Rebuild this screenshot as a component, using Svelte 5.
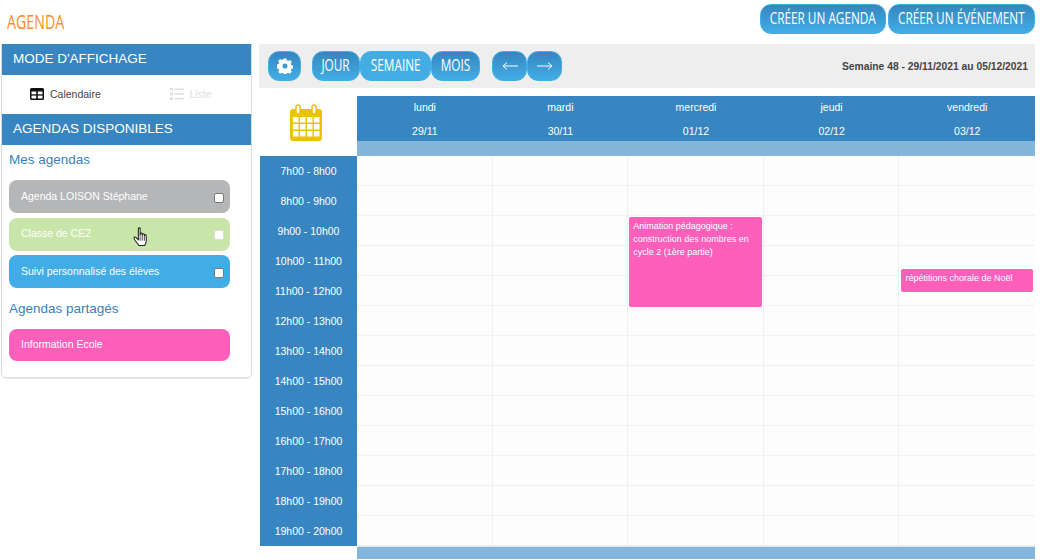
<script>
	const days = [
		{ name: 'lundi', date: '29/11', events: [] },
		{ name: 'mardi', date: '30/11', events: [] },
		{
			name: 'mercredi',
			date: '01/12',
			events: [{ title: 'Animation pédagogique : construction des nombres en cycle 2 (1ère partie)', top: 61, height: 90, left: 1 }]
		},
		{ name: 'jeudi', date: '02/12', events: [] },
		{ name: 'vendredi', date: '03/12', events: [{ title: 'répétitions chorale de Noël', top: 113, height: 23, left: 2 }] }
	];

	const hours = Array.from({ length: 13 }, (_, i) => `${i + 7}h00 - ${i + 8}h00`);

	const myAgendas = [
		{ label: 'Agenda LOISON Stéphane', color: 'grey' },
		{ label: 'Classe de CE2', color: 'green' },
		{ label: 'Suivi personnalisé des élèves', color: 'blue' }
	];
</script>

<div class="page">
	<header>
		<h1>AGENDA</h1>
		<div class="actions">
			<button class="btn create"><span>CRÉER UN AGENDA</span></button>
			<button class="btn event-btn"><span>CRÉER UN ÉVÉNEMENT</span></button>
		</div>
	</header>

	<div class="content">
		<aside>
			<h2>MODE D'AFFICHAGE</h2>
			<div class="modes">
				<div class="mode">
					<svg width="14" height="12" viewBox="0 0 14 12">
						<rect x="0" y="0" width="14" height="12" rx="1.5" fill="#111" />
						<rect x="1.5" y="3.5" width="4.7" height="2.8" fill="#fff" />
						<rect x="7.8" y="3.5" width="4.7" height="2.8" fill="#fff" />
						<rect x="1.5" y="7.6" width="4.7" height="2.9" fill="#fff" />
						<rect x="7.8" y="7.6" width="4.7" height="2.9" fill="#fff" />
					</svg>
					<span>Calendaire</span>
				</div>
				<div class="mode off">
					<svg width="14" height="12" viewBox="0 0 14 12" fill="#dedede">
						<rect x="0" y="0" width="3" height="2.6" />
						<rect x="0" y="4.7" width="3" height="2.6" />
						<rect x="0" y="9.4" width="3" height="2.6" />
						<rect x="4.5" y="0.5" width="9.5" height="1.5" />
						<rect x="4.5" y="5.2" width="9.5" height="1.5" />
						<rect x="4.5" y="9.9" width="9.5" height="1.5" />
					</svg>
					<span>Liste</span>
				</div>
			</div>
			<h2>AGENDAS DISPONIBLES</h2>
			<div class="lists">
				<h3>Mes agendas</h3>
				<div class="agendas">
					{#each myAgendas as a}
						<div class="agenda {a.color}">
							<span>{a.label}</span>
							<input type="checkbox" />
							{#if a.color === 'green'}
								<svg class="cursor" width="17" height="21" viewBox="0 0 16 20">
									<path
										d="M5 1.6c0-1 1.7-1 1.7 0V8l.3-1.6c.2-.9 1.6-.8 1.7.1V8.500l.3-1.500c.2-.9 1.600-.7 1.700.2v1.700l.3-1c.3-.8 1.500-.5 1.500.4v4.700c0 2-.8 3.200-1.500 4.700H5.500C4.800 16.500 3.800 15.300 2.800 14 2 13 1 11.500 .9 10.500c-.1-.9 1-1.300 1.700-.6L5 12.300Z"
										fill="#fff"
										stroke="#222"
										stroke-width="1"
										stroke-linejoin="round"
									/>
									<path d="M6.700 9v4M8.700 9v4M10.700 9.500v3.500" stroke="#222" stroke-width=".8" fill="none" />
								</svg>
							{/if}
						</div>
					{/each}
				</div>
				<h3 class="shared">Agendas partagés</h3>
				<div class="agenda pink"><span>Information Ecole</span></div>
			</div>
		</aside>

		<main>
			<div class="toolbar">
				<button class="btn square" aria-label="Paramètres">
					<svg width="16" height="16" viewBox="0 0 16 16">
						<path
							fill="#fff"
							fill-rule="evenodd"
							d="M6.600 .5h2.800l.4 2 1.300.6 1.800-1.100 2 2-1.100 1.800.6 1.300 2 .4v2.800l-2 .4-.6 1.300 1.100 1.800-2 2-1.800-1.100-1.300.6-.4 2H6.600l-.4-2-1.300-.6-1.800 1.100-2-2 1.100-1.800-.6-1.300-2-.4V6.500l2-.4.6-1.300L1.100 3l2-2 1.800 1.100 1.300-.6ZM8 5.500a2.500 2.500 0 1 0 0 5 2.500 2.500 0 0 0 0-5Z"
						/>
					</svg>
				</button>
				<div class="group views">
					<button class="btn jour"><span>JOUR</span></button>
					<button class="btn active semaine"><span>SEMAINE</span></button>
					<button class="btn mois"><span>MOIS</span></button>
				</div>
				<div class="group">
					<button class="btn arrow" aria-label="Précédent">
						<svg width="16" height="10" viewBox="0 0 16 10" fill="none" stroke="#fff" stroke-width="1">
							<path d="M1 5h15M5 1.500 1 5l4 3.500" />
						</svg>
					</button>
					<button class="btn arrow" aria-label="Suivant">
						<svg width="16" height="10" viewBox="0 0 16 10" fill="none" stroke="#fff" stroke-width="1">
							<path d="M0 5h15M11 1.500 15 5l-4 3.500" />
						</svg>
					</button>
				</div>
				<div class="week">Semaine 48 - 29/11/2021 au 05/12/2021</div>
			</div>

			<div class="calendar">
				<div class="hours">
					<div class="corner">
						<svg width="34" height="37" viewBox="0 0 34 37">
							<rect x="1" y="5" width="32" height="32" rx="3" fill="#ecc300" />
							<rect x="7" y="1" width="4" height="9" rx="2" fill="#fff" stroke="#ecc300" stroke-width="1.500" />
							<rect x="23" y="1" width="4" height="9" rx="2" fill="#fff" stroke="#ecc300" stroke-width="1.500" />
							<g fill="#fff">
								{#each [13, 20, 27] as y}
									{#each [4, 11, 18, 25] as x}
										<rect {x} {y} width="5.500" height="5.500" />
									{/each}
								{/each}
							</g>
						</svg>
					</div>
					{#each hours as h}
						<div class="hour">{h}</div>
					{/each}
				</div>
				{#each days as d}
					<div class="day">
						<div class="day-head">
							<span>{d.name}</span>
							<span>{d.date}</span>
						</div>
						<div class="day-strip"></div>
						<div class="cells">
							{#each hours as h}
								<div class="cell"></div>
							{/each}
							{#each d.events as e}
								<div class="event" style="top: {e.top}px; height: {e.height}px; left: {e.left}px">{e.title}</div>
							{/each}
						</div>
						<div class="day-foot"></div>
					</div>
				{/each}
			</div>
		</main>
	</div>
</div>

<style>
	:global(body) {
		background: #fff;
		font-family: 'Liberation Sans', Arial, sans-serif;
	}

	.page {
		width: 1040px;
		height: 560px;
		overflow: hidden;
	}

	header {
		height: 44px;
		display: flex;
		justify-content: space-between;
		padding: 4px 5px 0 7px;
		box-sizing: border-box;
	}

	h1 {
		margin: 8px 0 0;
		font: 400 20px/20px 'Open Sans', sans-serif;
		color: #ff8a2b;
		transform: scaleX(0.71);
		transform-origin: left;
	}

	.actions {
		display: flex;
		gap: 2px;
	}

	/* no hand-drawn font here, so the label is squeezed to get the same narrow caps */
	.btn {
		height: 30px;
		padding: 0;
		border: 1px solid #43aee6;
		border-radius: 11px;
		background: linear-gradient(#3686c0, #42ade5);
		color: #fff;
		font: 400 15.500px/1 'Open Sans', sans-serif;
		white-space: nowrap;
		display: flex;
		align-items: center;
		justify-content: center;
	}

	.btn span {
		display: block;
		transform: scaleX(0.76);
	}

	.create {
		width: 126px;
	}

	.event-btn {
		width: 147px;
	}

	.content {
		display: flex;
		gap: 7px;
		padding-left: 1px;
	}

	aside {
		width: 251px;
		height: 334px;
		box-sizing: border-box;
		border: 1px solid #d8dde2;
		border-top: 0;
		border-radius: 0 0 5px 5px;
		box-shadow: 0 1px 1px #e8e8e8;
	}

	h2 {
		margin: 0;
		height: 31px;
		padding-left: 11px;
		background: #3786c1;
		color: #fff;
		font: 400 13.500px/30px 'Liberation Sans', sans-serif;
	}

	.modes {
		height: 39px;
		display: flex;
	}

	.mode {
		width: 50%;
		display: flex;
		align-items: center;
		padding-left: 28px;
		box-sizing: border-box;
		gap: 6px;
		font-size: 10.500px;
		color: #444;
		padding-bottom: 2px;
	}

	.mode.off {
		color: #dedede;
		padding-left: 43px;
	}

	.lists {
		padding: 6px 21px 0 7px;
	}

	h3 {
		margin: 0 0 11px;
		font: 400 13.500px/18px 'Liberation Sans', sans-serif;
		color: #3a7fb8;
	}

	h3.shared {
		margin: 12px 0 11px;
	}

	.agendas {
		display: flex;
		flex-direction: column;
		gap: 4.500px;
	}

	.agenda {
		position: relative;
		height: 33px;
		border-radius: 8px;
		box-sizing: border-box;
		padding: 0 6px 2px 12px;
		display: flex;
		align-items: center;
		justify-content: space-between;
		color: #fff;
		font-size: 10.500px;
	}

	.agenda input {
		width: 8px;
		height: 8px;
		margin: 4px 0 0;
		appearance: none;
		background: #fff;
		border: 1px solid #777;
		border-radius: 2px;
		box-sizing: content-box;
	}

	.agenda.green input {
		border-color: #ddd;
	}

	.grey {
		background: #b5b6b8;
	}

	.green {
		background: #c8e6a9;
	}

	.blue {
		background: #41ace6;
	}

	.pink {
		background: #fe5fbb;
		height: 32px;
		padding-bottom: 3px;
	}

	.cursor {
		position: absolute;
		left: 124px;
		top: 9px;
	}

	main {
		width: 776px;
	}

	.toolbar {
		height: 44px;
		background: #eee;
		display: flex;
		align-items: center;
		padding: 0 7px 0 9px;
		box-sizing: border-box;
	}

	.square {
		width: 33px;
	}

	.group {
		display: flex;
		margin-left: 12px;
	}

	.views {
		margin-left: 11px;
	}

	.jour {
		width: 48px;
	}

	.semaine {
		width: 71px;
	}

	.mois {
		width: 49px;
	}

	.btn.active {
		background: linear-gradient(#42ade5, #42ade5);
	}

	.arrow {
		width: 35px;
	}

	.week {
		margin-left: auto;
		font-size: 10.300px;
		font-weight: 700;
		color: #444;
	}

	.calendar {
		margin-top: 8px;
		display: grid;
		grid-template-columns: 98px repeat(5, 1fr);
	}

	.corner {
		height: 60px;
		background: #fff;
		display: flex;
		justify-content: center;
		padding: 8px 5px 0 0;
		box-sizing: border-box;
	}

	.hour {
		height: 30px;
		margin-left: 1px;
		background: #3786c1;
		color: #fff;
		font-size: 10.500px;
		line-height: 30px;
		text-align: center;
	}

	.day-head {
		height: 45px;
		background: #3786c1;
		color: #fff;
		font-size: 10.500px;
		display: flex;
		flex-direction: column;
		align-items: center;
		justify-content: space-between;
		padding: 5px 0 4px;
		box-sizing: border-box;
	}

	.day-strip {
		height: 15px;
		background: #84b5da;
	}

	.cells {
		position: relative;
	}

	.cell {
		height: 30px;
		box-sizing: border-box;
		background: #fdfdfd;
		border-bottom: 1px solid #f1f1f1;
		border-right: 1px solid #f1f1f1;
	}

	.day:last-child .cell {
		border-right: 0;
	}

	.day-foot {
		height: 13px;
		background: #84b5da;
		border-top: 1px solid #e4e4e4;
		box-sizing: border-box;
	}

	.event {
		position: absolute;
		right: 2px;
		background: #fe5fbb;
		border-radius: 2px;
		color: #fff;
		font-size: 9px;
		line-height: 13px;
		padding: 3px 4px;
		box-sizing: border-box;
	}
</style>
